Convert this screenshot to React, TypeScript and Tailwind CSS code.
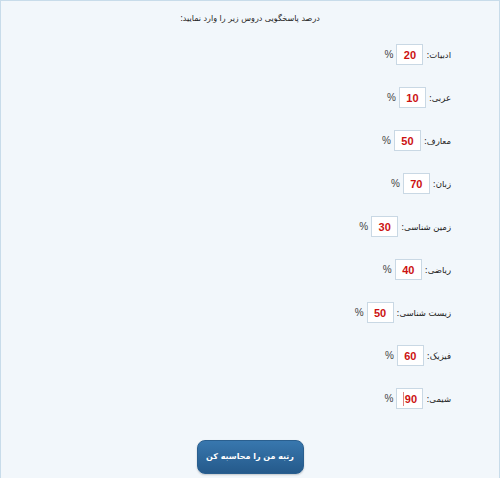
const subjects: { name: string; value: number; focused?: boolean }[] = [
  { name: 'ادبیات', value: 20 },
  { name: 'عربی', value: 10 },
  { name: 'معارف', value: 50 },
  { name: 'زبان', value: 70 },
  { name: 'زمین شناسی', value: 30 },
  { name: 'ریاضی', value: 40 },
  { name: 'زیست شناسی', value: 50 },
  { name: 'فیزیک', value: 60 },
  { name: 'شیمی', value: 90, focused: true },
];

export default function App() {
  return (
    <div
      dir="rtl"
      className="w-[500px] h-[478px] overflow-hidden bg-[#f2f7fb] border-t border-l border-r border-[#c8dcea] text-[8.5px] text-[#222] font-['DejaVu_Sans',sans-serif] flex flex-col"
    >
      <div className="pt-[11px] text-center text-[8px] leading-[14px]">درصد پاسخگویی دروس زیر را وارد نمایید:</div>

      <div className="mt-[18px] pr-[48px] flex flex-col gap-[22px]">
        {subjects.map((s) => (
          <div key={s.name} className="flex items-center h-[21px]">
            <span className="leading-[14px]">{s.name}:</span>
            <div className="mr-[3px] w-[27px] h-[21px] bg-white border border-[#c9d8e4] flex items-center justify-center gap-[1px]" dir="ltr">
              {s.focused && <span className="w-[1px] h-[14px] bg-[#e08080]" />}
              <span className="font-bold text-[#cc1111] text-[11px] leading-[14px] font-['Liberation_Sans',sans-serif]">{s.value}</span>
            </div>
            <span className="mr-[3px] text-[10px] text-[#444] font-['Liberation_Sans',sans-serif]">%</span>
          </div>
        ))}
      </div>

      <div className="mt-[31px] flex justify-center">
        <button className="w-[107px] h-[34px] rounded-[8px] bg-gradient-to-b from-[#3877ae] to-[#255a8b] border border-[#2a5f8f] text-white text-[8px] font-bold whitespace-nowrap shadow-[0_1px_2px_rgba(0,0,0,0.2)]">
          رتبه من را محاسبه کن
        </button>
      </div>
    </div>
  );
}
